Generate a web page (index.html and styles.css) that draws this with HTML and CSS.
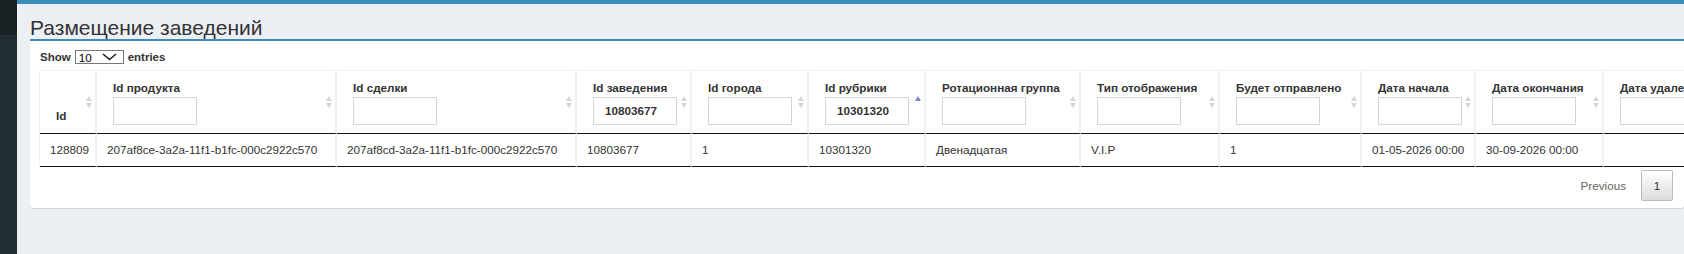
FILE: index.html
```html
<!DOCTYPE html>
<html lang="ru">
<head>
    <meta charset="UTF-8">
    <meta name="viewport" content="width=device-width, initial-scale=1.0">
    <title>Размещение заведений</title>
    <link rel="stylesheet" href="styles.css">
</head>
<body>

    <div class="layout">
        <aside class="sidebar">
            <div class="sidebar-top"></div>
        </aside>

        <div class="main">
            <div class="topbar"></div>

            <section class="content">
                <h1 class="page-title">Размещение заведений</h1>

                <div class="box">
                    <!-- длина страницы -->
                    <div class="dt-top">
                        <span>Show</span>
                        <span class="select">
                            <span>10</span>
                            <svg width="15" height="8" viewBox="0 0 15 8"><path d="M1 1 L7.5 6.5 L14 1" fill="none" stroke="#222" stroke-width="1.6"/></svg>
                        </span>
                        <span>entries</span>
                    </div>

                    <table class="grid">
                        <colgroup>
                            <col style="width:57px">
                            <col style="width:240px">
                            <col style="width:240px">
                            <col style="width:115px">
                            <col style="width:117px">
                            <col style="width:117px">
                            <col style="width:155px">
                            <col style="width:139px">
                            <col style="width:142px">
                            <col style="width:114px">
                            <col style="width:128px">
                            <col style="width:150px">
                        </colgroup>
                        <thead>
                            <tr>
                                <th class="sorting"><div class="label">Id</div></th>
                                <th class="sorting"><div class="label">Id продукта</div><input class="filter" type="text"></th>
                                <th class="sorting"><div class="label">Id сделки</div><input class="filter" type="text"></th>
                                <th class="sorting"><div class="label">Id заведения</div><input class="filter" type="text" value="10803677"></th>
                                <th class="sorting"><div class="label">Id города</div><input class="filter" type="text"></th>
                                <th class="sorting-asc"><div class="label">Id рубрики</div><input class="filter" type="text" value="10301320"></th>
                                <th class="sorting"><div class="label">Ротационная группа</div><input class="filter" type="text"></th>
                                <th class="sorting"><div class="label">Тип отображения</div><input class="filter" type="text"></th>
                                <th class="sorting"><div class="label">Будет отправлено</div><input class="filter" type="text"></th>
                                <th class="sorting"><div class="label">Дата начала</div><input class="filter" type="text"></th>
                                <th class="sorting"><div class="label">Дата окончания</div><input class="filter" type="text"></th>
                                <th class="sorting"><div class="label">Дата удаления</div><input class="filter" type="text"></th>
                            </tr>
                        </thead>
                        <tbody>
                            <tr>
                                <td>128809</td>
                                <td>207af8ce-3a2a-11f1-b1fc-000c2922c570</td>
                                <td>207af8cd-3a2a-11f1-b1fc-000c2922c570</td>
                                <td>10803677</td>
                                <td>1</td>
                                <td>10301320</td>
                                <td>Двенадцатая</td>
                                <td>V.I.P</td>
                                <td>1</td>
                                <td>01-05-2026 00:00</td>
                                <td>30-09-2026 00:00</td>
                                <td></td>
                            </tr>
                        </tbody>
                    </table>

                    <!-- пагинация -->
                    <div class="dt-bottom">
                        <span class="page-prev">Previous</span>
                        <span class="page-current">1</span>
                    </div>
                </div>
            </section>
        </div>
    </div>

</body>
</html>
```

FILE: styles.css
```css
body {
    margin: 0;
    font-family: "Liberation Sans", Arial, sans-serif;
    font-size: 11.7px;
    color: #333;
    background: #ecf0f5;
}

.layout {
    display: flex;
    min-height: 100vh;
}

.sidebar {
    width: 17px;
    flex: none;
    background: #222d32;
}

.sidebar-top {
    height: 35px;
    background: #1a2226;
}

.main {
    flex: 1;
    min-width: 0;
    display: flex;
    flex-direction: column;
}

.topbar {
    height: 4px;
    background: #3c8dbc;
}

.content {
    padding: 12px 0 0 13px;
}

.page-title {
    margin: 0;
    font-size: 21px;
    font-weight: normal;
    line-height: 23px;
    color: #333;
}

.box {
    background: #fff;
    border-top: 2px solid #3c8dbc;
    border-radius: 0 0 3px 3px;
    box-shadow: 0 1px 1px rgba(0, 0, 0, 0.12);
    padding: 8px 11px 7px 9px;
    overflow: hidden;
}

.dt-top {
    display: flex;
    align-items: center;
    gap: 4px;
    height: 16px;
    margin: 0 0 5px 1px;
    font-size: 11.5px;
    font-weight: bold;
}

.select {
    display: inline-flex;
    align-items: center;
    justify-content: space-between;
    box-sizing: border-box;
    width: 49px;
    height: 14px;
    padding: 0 6px 0 3px;
    border: 1px solid #767676;
    background: #fff;
    color: #000;
    font-weight: normal;
    font-size: 11.7px;
}

.grid {
    border-collapse: separate;
    border-spacing: 0;
    table-layout: fixed;
    width: 1715px;
    border-left: 1px solid #f1f1f1;
}

.grid th {
    position: relative;
    text-align: left;
    vertical-align: bottom;
    padding: 9px 18px 8px 16px;
    font-weight: bold;
    line-height: 16.7px;
    white-space: nowrap;
    border-top: 1px solid #f1f1f1;
    border-right: 2px solid #f1f1f1;
    border-bottom: 1px solid #111;
}

.grid td {
    padding: 8px 10px;
    line-height: 16.7px;
    white-space: nowrap;
    border-right: 2px solid #f1f1f1;
    border-bottom: 1px solid #111;
}

.filter {
    display: block;
    box-sizing: border-box;
    width: 84px;
    height: 28px;
    margin: 0;
    padding: 0 11px;
    border: 1px solid #d2d6de;
    font-family: "Liberation Sans", Arial, sans-serif;
    font-size: 11.7px;
    font-weight: bold;
    color: #333;
    outline: none;
}

/* стрелки сортировки */
.sorting::before,
.sorting::after,
.sorting-asc::before {
    content: "";
    position: absolute;
    right: 3px;
    width: 0;
    height: 0;
    border-left: 3.5px solid transparent;
    border-right: 3.5px solid transparent;
}

.sorting::before {
    top: calc(50% - 6px);
    border-bottom: 5px solid #d6d6d6;
}

.sorting::after {
    top: calc(50% + 1px);
    border-top: 5px solid #d6d6d6;
}

.sorting-asc::before {
    top: calc(50% - 6px);
    border-bottom: 5px solid #7b83d4;
}

.dt-bottom {
    display: flex;
    justify-content: flex-end;
    align-items: center;
    padding-top: 3px;
}

.page-prev {
    padding: 7px 12px;
    line-height: 16.7px;
    color: #666;
}

.page-current {
    box-sizing: border-box;
    width: 32px;
    height: 31px;
    margin-left: 3px;
    line-height: 29px;
    text-align: center;
    color: #333;
    border: 1px solid #bbb;
    border-radius: 2px;
    background: linear-gradient(to bottom, #fff 0%, #dcdcdc 100%);
}
```
